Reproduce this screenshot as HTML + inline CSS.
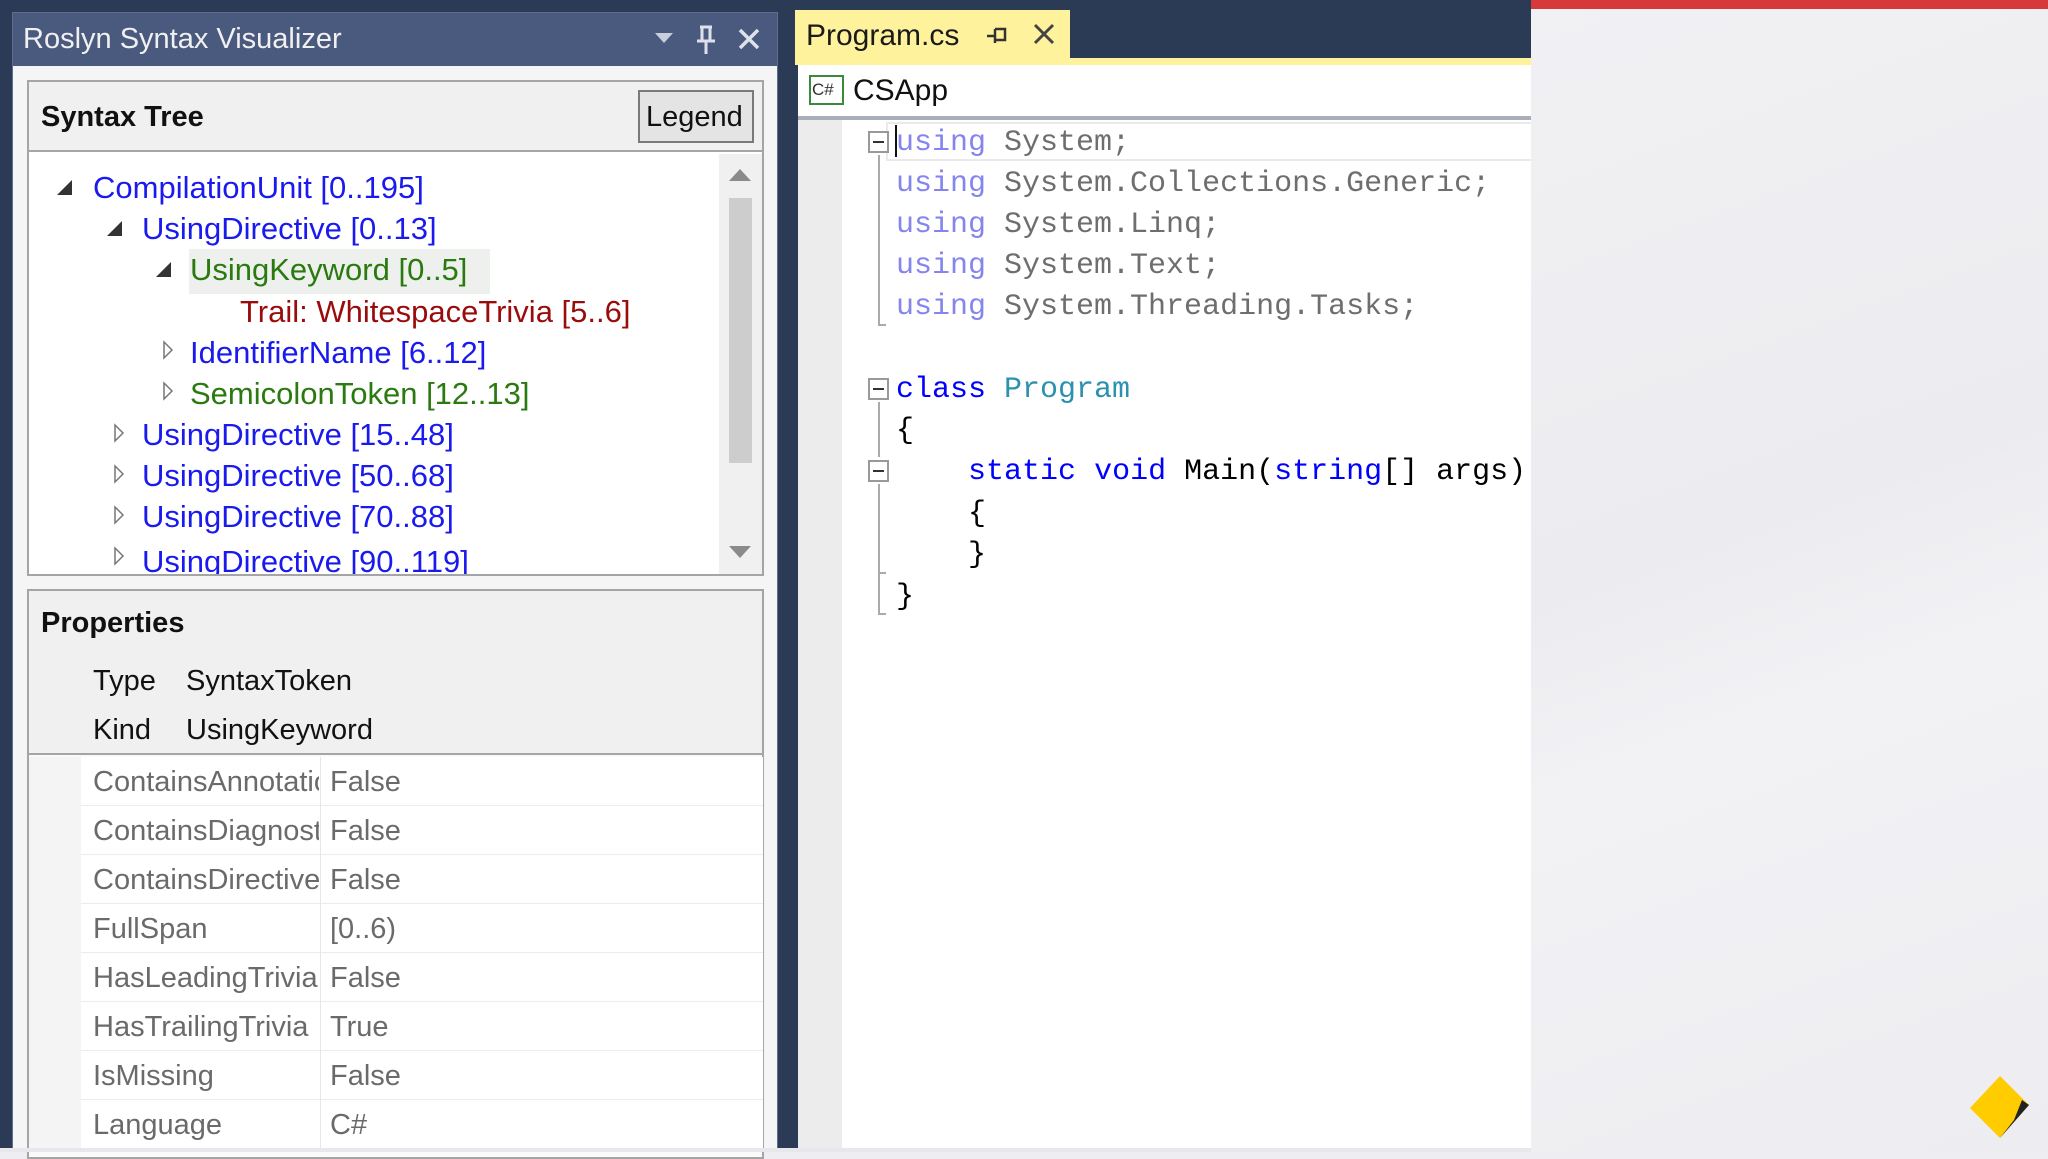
<!DOCTYPE html>
<html><head><meta charset="utf-8"><style>
*{margin:0;padding:0;box-sizing:border-box}
body{width:2048px;height:1152px;overflow:hidden;position:relative;background:#eeeef2;font-family:"Liberation Sans",sans-serif}
.a{position:absolute}
.t{position:absolute;white-space:nowrap;line-height:1}
.ui{font-size:29px}
.tr{font-size:31px}
.mono{font-family:"Liberation Mono",monospace;font-size:30px;white-space:pre;position:absolute;line-height:1}
.kw{color:#0000ff}.kwf{color:#8585f0}.gr{color:#6e6e6e}.ty{color:#2b91af}
.tri{position:absolute;width:0;height:0}
.row{position:absolute;left:81px;width:682px;height:49px;border-bottom:1px solid #ececec;background:#fff}
.lbl{position:absolute;left:93px;width:226px;overflow:hidden;color:#6a6a6a;font-size:29px;white-space:nowrap;line-height:1}
.val{position:absolute;left:330px;color:#6a6a6a;font-size:29px;line-height:1}
</style></head><body>
<div class="a" style="left:1531px;top:0;width:517px;height:1152px;background:linear-gradient(160deg,#f1f1f4 0%,#ececf0 45%,#f2f2f5 60%,#ededf1 100%)"></div>
<div class="a" style="left:1531px;top:0;width:517px;height:9px;background:#d7393b"></div>
<svg class="a" style="left:1966px;top:1075px" width="70" height="66" viewBox="0 0 70 66">
<polygon points="34,1 63,30 34,63 4,33" fill="#ffcc00"/>
<polygon points="63,30 56,25 48,45 34,63" fill="#222"/>
</svg>
<div class="a" style="left:0;top:0;width:1531px;height:1152px;background:#2b3a55"></div>
<div class="a" style="left:12px;top:12px;width:766px;height:1140px;background:#f5f5f5;border:1px solid #5d6d8e"></div>
<div class="a" style="left:13px;top:13px;width:764px;height:53px;background:#4a5a7e"></div>
<div class="t" style="left:23px;top:25px;font-size:29px;color:#f0f0f0">Roslyn Syntax Visualizer</div>
<div class="tri" style="left:655px;top:33px;border-left:9px solid transparent;border-right:9px solid transparent;border-top:10px solid #c8cfdc"></div>
<svg class="a" style="left:694px;top:24px" width="24" height="32" viewBox="0 0 24 32"><path d="M6 3h12M8 3v14h8V3M3 17h18M12 17v13" stroke="#dde2ea" stroke-width="3" fill="none"/></svg>
<svg class="a" style="left:737px;top:27px" width="24" height="24" viewBox="0 0 24 24"><path d="M3 3L21 21M21 3L3 21" stroke="#dde2ea" stroke-width="3.5"/></svg>
<div class="a" style="left:27px;top:80px;width:737px;height:496px;background:#fff;border:2px solid #a5a5a5"></div>
<div class="a" style="left:29px;top:82px;width:733px;height:70px;background:#f0f0f0;border-bottom:2px solid #a5a5a5"></div>
<div class="t ui" style="left:41px;top:103px;font-weight:bold;color:#111">Syntax Tree</div>
<div class="a" style="left:638px;top:90px;width:116px;height:53px;background:#e4e4e4;border:2px solid #7a7a7a"></div>
<div class="t ui" style="left:646px;top:103px;color:#111">Legend</div>
<div class="a" style="left:719px;top:154px;width:43px;height:420px;background:#f0f0f0"></div>
<div class="tri" style="left:729px;top:169px;border-left:11px solid transparent;border-right:11px solid transparent;border-bottom:12px solid #8a8a8a"></div>
<div class="a" style="left:729px;top:198px;width:23px;height:265px;background:#cdcdcd"></div>
<div class="tri" style="left:729px;top:546px;border-left:11px solid transparent;border-right:11px solid transparent;border-top:12px solid #8a8a8a"></div>
<div class="a" style="left:29px;top:154px;width:690px;height:420px;overflow:hidden">
<div class="a" style="left:160px;top:95px;width:301px;height:45px;background:#eef0ee"></div>
<div class="tri" style="left:28px;top:26px;border-left:15px solid transparent;border-bottom:15px solid #333"></div>
<div class="t tr" style="left:64px;top:18px;color:#1a1aee">CompilationUnit [0..195]</div>
<div class="tri" style="left:78px;top:67px;border-left:15px solid transparent;border-bottom:15px solid #333"></div>
<div class="t tr" style="left:113px;top:59px;color:#1a1aee">UsingDirective [0..13]</div>
<div class="tri" style="left:127px;top:108px;border-left:15px solid transparent;border-bottom:15px solid #333"></div>
<div class="t tr" style="left:161px;top:100px;color:#2a7a10">UsingKeyword [0..5]</div>
<div class="t tr" style="left:211px;top:142px;color:#9a0c0c">Trail: WhitespaceTrivia [5..6]</div>
<svg class="a" style="left:133px;top:186px" width="12" height="20"><path d="M2 2L10 10L2 18Z" fill="#fff" stroke="#777" stroke-width="1.5"/></svg>
<div class="t tr" style="left:161px;top:183px;color:#1a1aee">IdentifierName [6..12]</div>
<svg class="a" style="left:133px;top:227px" width="12" height="20"><path d="M2 2L10 10L2 18Z" fill="#fff" stroke="#777" stroke-width="1.5"/></svg>
<div class="t tr" style="left:161px;top:224px;color:#2a7a10">SemicolonToken [12..13]</div>
<svg class="a" style="left:84px;top:269px" width="12" height="20"><path d="M2 2L10 10L2 18Z" fill="#fff" stroke="#777" stroke-width="1.5"/></svg>
<div class="t tr" style="left:113px;top:265px;color:#1a1aee">UsingDirective [15..48]</div>
<svg class="a" style="left:84px;top:310px" width="12" height="20"><path d="M2 2L10 10L2 18Z" fill="#fff" stroke="#777" stroke-width="1.5"/></svg>
<div class="t tr" style="left:113px;top:306px;color:#1a1aee">UsingDirective [50..68]</div>
<svg class="a" style="left:84px;top:351px" width="12" height="20"><path d="M2 2L10 10L2 18Z" fill="#fff" stroke="#777" stroke-width="1.5"/></svg>
<div class="t tr" style="left:113px;top:347px;color:#1a1aee">UsingDirective [70..88]</div>
<svg class="a" style="left:84px;top:392px" width="12" height="20"><path d="M2 2L10 10L2 18Z" fill="#fff" stroke="#777" stroke-width="1.5"/></svg>
<div class="t tr" style="left:113px;top:392px;color:#1a1aee">UsingDirective [90..119]</div>
</div>
<div class="a" style="left:27px;top:589px;width:737px;height:570px;background:#fafafa;border:2px solid #a5a5a5"></div>
<div class="a" style="left:29px;top:591px;width:733px;height:164px;background:#f0f0f0;border-bottom:2px solid #a5a5a5"></div>
<div class="t ui" style="left:41px;top:609px;font-weight:bold;color:#111">Properties</div>
<div class="t ui" style="left:93px;top:667px;color:#111">Type</div>
<div class="t ui" style="left:186px;top:667px;color:#111">SyntaxToken</div>
<div class="t ui" style="left:93px;top:716px;color:#111">Kind</div>
<div class="t ui" style="left:186px;top:716px;color:#111">UsingKeyword</div>
<div class="a" style="left:29px;top:757px;width:52px;height:395px;background:#f4f4f4"></div>
<div class="row" style="top:757px"></div><div class="row" style="top:806px"></div><div class="row" style="top:855px"></div><div class="row" style="top:904px"></div><div class="row" style="top:953px"></div><div class="row" style="top:1002px"></div><div class="row" style="top:1051px"></div><div class="row" style="top:1100px"></div>
<div class="a" style="left:320px;top:757px;width:1px;height:395px;background:#e6e6e6"></div>
<div class="lbl" style="top:768px">ContainsAnnotations</div><div class="val" style="top:768px">False</div>
<div class="lbl" style="top:817px">ContainsDiagnostics</div><div class="val" style="top:817px">False</div>
<div class="lbl" style="top:866px">ContainsDirectives</div><div class="val" style="top:866px">False</div>
<div class="lbl" style="top:915px">FullSpan</div><div class="val" style="top:915px">[0..6)</div>
<div class="lbl" style="top:964px">HasLeadingTrivia</div><div class="val" style="top:964px">False</div>
<div class="lbl" style="top:1013px">HasTrailingTrivia</div><div class="val" style="top:1013px">True</div>
<div class="lbl" style="top:1062px">IsMissing</div><div class="val" style="top:1062px">False</div>
<div class="lbl" style="top:1111px">Language</div><div class="val" style="top:1111px">C#</div>
<div class="a" style="left:0;top:1148px;width:1531px;height:4px;background:#e8e8ec"></div>
<div class="a" style="left:795px;top:10px;width:275px;height:50px;background:#fff29d"></div>
<div class="t" style="left:806px;top:21px;font-size:30px;color:#1a1a1a">Program.cs</div>
<svg class="a" style="left:985px;top:24px" width="26" height="24"><path d="M2 12h8M10 5v14M10 5h10v11h-10" stroke="#333" stroke-width="2.5" fill="none"/></svg>
<svg class="a" style="left:1033px;top:23px" width="22" height="22"><path d="M2 2L20 20M20 2L2 20" stroke="#444" stroke-width="3"/></svg>
<div class="a" style="left:795px;top:58px;width:736px;height:7px;background:#fff29d"></div>
<div class="a" style="left:798px;top:65px;width:733px;height:55px;background:#fff;border-bottom:4px solid #a9aebb"></div>
<div class="a" style="left:809px;top:75px;width:35px;height:30px;border:2px solid #3a8a3a;background:#fff"></div>
<div class="t" style="left:812px;top:81px;font-size:17px;color:#333">C#</div>
<div class="t" style="left:853px;top:76px;font-size:30px;color:#111">CSApp</div>
<div class="a" style="left:798px;top:120px;width:733px;height:1028px;background:#fff"></div>
<div class="a" style="left:798px;top:120px;width:44px;height:1028px;background:#ececec"></div>
<div class="a" style="left:886px;top:122px;width:645px;height:39px;border:2px solid #eaeaea;border-right:none"></div>
<div class="a" style="left:895px;top:125px;width:2px;height:32px;background:#111"></div>
<div class="a" style="left:868px;top:131px;width:21px;height:22px;border:2px solid #999;background:#fff"></div><div class="a" style="left:873px;top:141px;width:11px;height:2px;background:#333"></div>
<div class="a" style="left:878px;top:155px;width:2px;height:170px;background:#aaa"></div><div class="a" style="left:878px;top:324px;width:8px;height:2px;background:#aaa"></div>
<div class="a" style="left:868px;top:378px;width:21px;height:22px;border:2px solid #999;background:#fff"></div><div class="a" style="left:873px;top:388px;width:11px;height:2px;background:#333"></div>
<div class="a" style="left:878px;top:402px;width:2px;height:55px;background:#aaa"></div>
<div class="a" style="left:868px;top:460px;width:21px;height:22px;border:2px solid #999;background:#fff"></div><div class="a" style="left:873px;top:470px;width:11px;height:2px;background:#333"></div>
<div class="a" style="left:878px;top:484px;width:2px;height:130px;background:#aaa"></div><div class="a" style="left:878px;top:613px;width:8px;height:2px;background:#aaa"></div>
<div class="a" style="left:878px;top:572px;width:8px;height:2px;background:#aaa"></div>
<div class="mono" style="left:896px;top:128px"><span class="kwf">using</span> <span class="gr">System;</span></div>
<div class="mono" style="left:896px;top:169px"><span class="kwf">using</span> <span class="gr">System.Collections.Generic;</span></div>
<div class="mono" style="left:896px;top:210px"><span class="kwf">using</span> <span class="gr">System.Linq;</span></div>
<div class="mono" style="left:896px;top:251px"><span class="kwf">using</span> <span class="gr">System.Text;</span></div>
<div class="mono" style="left:896px;top:292px"><span class="kwf">using</span> <span class="gr">System.Threading.Tasks;</span></div>
<div class="mono" style="left:896px;top:375px"><span class="kw">class</span> <span class="ty">Program</span></div>
<div class="mono" style="left:896px;top:416px">{</div>
<div class="mono" style="left:896px;top:457px">    <span class="kw">static</span> <span class="kw">void</span> Main(<span class="kw">string</span>[] args)</div>
<div class="mono" style="left:896px;top:499px">    {</div>
<div class="mono" style="left:896px;top:540px">    }</div>
<div class="mono" style="left:896px;top:582px">}</div>
</body></html>
